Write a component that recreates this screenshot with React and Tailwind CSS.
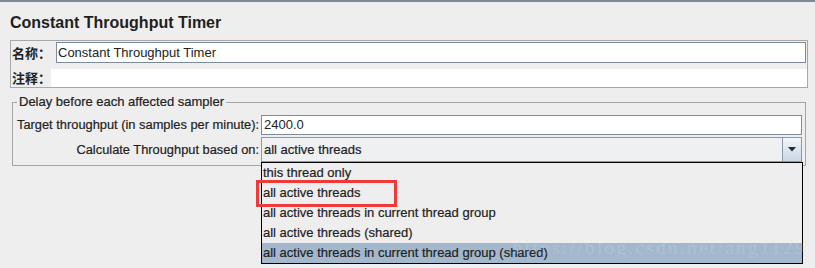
import React from "react";

const sans = { fontFamily: '"Liberation Sans", Arial, "Noto Sans CJK SC", sans-serif' };

export default function App() {
  const items = [
    "this thread only",
    "all active threads",
    "all active threads in current thread group",
    "all active threads (shared)",
    "all active threads in current thread group (shared)",
  ];
  return (
    <div
      className="relative w-[815px] h-[268px] overflow-hidden bg-[#eeeeee] text-[13px] text-[#222222]"
      style={sans}
    >
      <div className="h-[2px] bg-[#7c8898]" />
      <div className="pt-[12px] pl-[10px] h-[30px] text-[16px] leading-[18px] font-bold text-[#1e1e1e]">
        Constant Throughput Timer
      </div>
      <div className="mt-[8px] ml-[10px] w-[798px] h-[48px] border border-[#a8a8a8] flex flex-col">
        <div className="flex h-[22px] pt-[1px]">
          <div className="w-[45px] pl-[1px] flex items-center font-bold" style={{ fontFamily: '"Noto Sans CJK SC", sans-serif' }}>
            名称：
          </div>
          <div className="w-[750px] h-[21px] border border-[#7d8c9b] bg-white flex items-center pl-[1px]">
            Constant Throughput Timer
          </div>
        </div>
        <div className="h-[6px]" />
        <div className="flex h-[18px]">
          <div className="w-[40px] pl-[1px] flex items-center font-bold" style={{ fontFamily: '"Noto Sans CJK SC", sans-serif' }}>
            注释：
          </div>
          <div className="flex-1 bg-white" />
        </div>
      </div>
      <fieldset className="mt-[6px] ml-[12px] w-[794px] border border-[#a5a5a5] pb-[3px] [-webkit-text-stroke:0.2px]">
        <legend className="ml-[4px] px-[2px] leading-[16px] whitespace-nowrap">Delay before each affected sampler</legend>
        <div className="mt-[5px] flex h-[20px]">
          <div className="w-[246px] shrink-0 flex items-center justify-end text-[12.85px] whitespace-nowrap">Target throughput (in samples per minute):</div>
          <div className="ml-[2px] w-[541px] shrink-0 border border-[#7d8c9b] bg-white flex items-center pl-[2px] [-webkit-text-stroke:0px]">2400.0</div>
        </div>
        <div className="mt-[2px] flex h-[25px]">
          <div className="w-[246px] shrink-0 flex items-center justify-end text-[12.85px] whitespace-nowrap">Calculate Throughput based on:</div>
          <div className="ml-[2px] w-[541px] shrink-0 border border-[#8a9aab] bg-[#eef0f2] flex">
            <div className="flex-1 flex items-center pl-[2px]">all active threads</div>
            <div className="w-[19px] border-l border-[#8a9aab] bg-gradient-to-b from-[#f2f6fa] to-[#c8d6e4] flex items-center justify-center">
              <svg width="8" height="5" viewBox="0 0 8 5">
                <path d="M0 0 L8 0 L4 4.5 Z" fill="#2a2a2a" />
              </svg>
            </div>
          </div>
        </div>
      </fieldset>

      <div className="absolute left-[261px] top-[162px] w-[542px] h-[102px] border border-black bg-[#eeeeee] flex flex-col [-webkit-text-stroke:0.2px]">
        {items.map((t, i) => (
          <div
            key={i}
            className={
              "h-[20px] flex items-center pl-[1px] whitespace-nowrap " + (i === 4 ? "bg-[#a3b8cd]" : "")
            }
          >
            {t}
          </div>
        ))}
      </div>

      <div
        className="absolute left-[513px] top-[236px] text-[19px] leading-[24px] tracking-[2.4px] text-white/15 whitespace-nowrap"
        style={{ fontFamily: '"Liberation Serif", "Times New Roman", serif' }}
      >
        https://blog.csdn.net/ang1129
      </div>

      <div className="absolute left-[256px] top-[180px] w-[141px] h-[27px] border-[3px] border-[#f03a3a]" />
    </div>
  );
}
